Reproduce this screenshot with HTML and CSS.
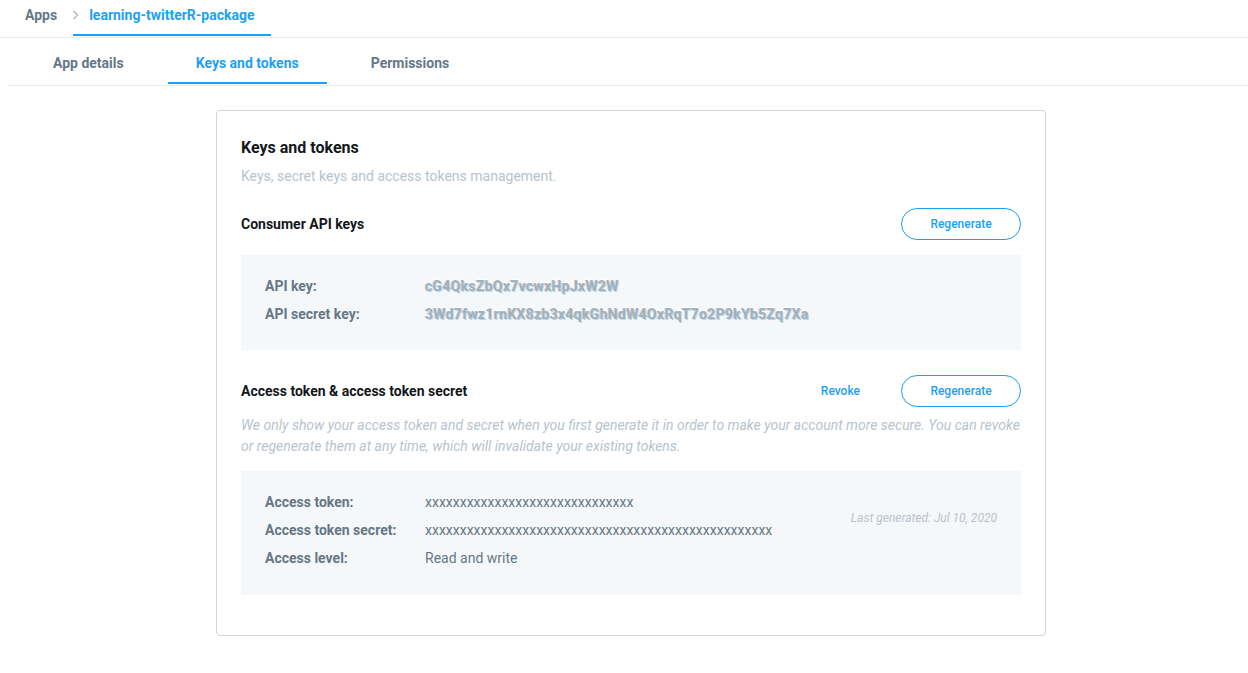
FILE: index.html
```html
<!DOCTYPE html>
<html>
<head>
<meta charset="utf-8">
<title>Keys and tokens</title>
<link rel="stylesheet" href="styles.css">
</head>
<body>
<header class="crumbs">
  <span class="crumb">Apps</span>
  <span class="chev"><svg width="7" height="10" viewBox="0 0 7 10"><path d="M1.5 1 L5.5 5 L1.5 9" fill="none" stroke="#aab8c2" stroke-width="1.3"/></svg></span>
  <span class="crumb crumb-active">learning-twitterR-package</span>
</header>
<nav class="tabs">
  <span class="tab">App details</span>
  <span class="tab tab-active">Keys and tokens</span>
  <span class="tab">Permissions</span>
</nav>
<main class="card">
  <h1 class="title">Keys and tokens</h1>
  <p class="subtitle">Keys, secret keys and access tokens management.</p>

  <div class="section-head first">
    <h2 class="section-title">Consumer API keys</h2>
    <div class="actions">
      <button class="btn">Regenerate</button>
    </div>
  </div>
  <div class="box box-keys">
    <div class="rows">
      <div class="row"><span class="label">API key:</span><span class="value blur">cG4QksZbQx7vcwxHpJxW2W</span></div>
      <div class="row"><span class="label">API secret key:</span><span class="value blur">3Wd7fwz1rnKX8zb3x4qkGhNdW4OxRqT7o2P9kYb5Zq7Xa</span></div>
    </div>
  </div>

  <div class="section-head">
    <h2 class="section-title">Access token &amp; access token secret</h2>
    <div class="actions">
      <button class="link">Revoke</button>
      <button class="btn">Regenerate</button>
    </div>
  </div>
  <p class="note">We only show your access token and secret when you first generate it in order to make your account more secure. You can revoke or regenerate them at any time, which will invalidate your existing tokens.</p>
  <div class="box box-tokens">
    <div class="rows">
      <div class="row"><span class="label">Access token:</span><span class="value">xxxxxxxxxxxxxxxxxxxxxxxxxxxxxx</span></div>
      <div class="row"><span class="label">Access token secret:</span><span class="value">xxxxxxxxxxxxxxxxxxxxxxxxxxxxxxxxxxxxxxxxxxxxxxxxxx</span></div>
      <div class="row"><span class="label">Access level:</span><span class="value">Read and write</span></div>
    </div>
    <span class="generated">Last generated: Jul 10, 2020</span>
  </div>
</main>
</body>
</html>
```

FILE: styles.css
```css
* { box-sizing: border-box; }
body {
  margin: 0;
  font-family: Roboto, "Liberation Sans", sans-serif;
  background: #fff;
  color: #14171a;
}
.crumbs {
  display: flex;
  align-items: flex-start;
  height: 38px;
  padding-left: 25px;
  border-bottom: 1px solid #e6ecf0;
}
.crumb {
  font-size: 14px;
  font-weight: 700;
  line-height: 30px;
  color: #657786;
}
.chev {
  display: flex;
  align-items: center;
  height: 30px;
  margin-left: 15px;
  width: 7px;
}
.crumb-active {
  margin-left: -6px;
  padding: 0 16px;
  height: 36px;
  color: #1da1f2;
  border-bottom: 2px solid #1da1f2;
}
.tabs {
  display: flex;
  gap: 16px;
  margin-left: 8px;
  padding-left: 17px;
  height: 48px;
  border-bottom: 1px solid #e6ecf0;
}
.tab {
  height: 46px;
  padding: 6px 28px 0;
  line-height: 38px;
  font-size: 14px;
  font-weight: 700;
  color: #657786;
}
.tab-active {
  color: #1da1f2;
  border-bottom: 2px solid #1da1f2;
}
.card {
  width: 830px;
  margin: 24px 0 0 216px;
  padding: 27px 24px 40px;
  border: 1px solid #ccd6dd;
  border-radius: 4px;
}
.title {
  margin: 0;
  font-size: 16px;
  line-height: 20px;
  font-weight: 700;
}
.subtitle {
  margin: 8px 0 0;
  font-size: 14px;
  line-height: 20px;
  color: #b8c3cc;
}
.section-head {
  display: flex;
  align-items: center;
  justify-content: space-between;
  height: 32px;
  margin-top: 25px;
}
.section-head.first { margin-top: 22px; }
.section-title {
  margin: 0;
  font-size: 14px;
  font-weight: 700;
  line-height: 20px;
}
.actions {
  display: flex;
  align-items: center;
  gap: 41px;
}
.btn {
  width: 120px;
  height: 32px;
  border: 1px solid #1da1f2;
  border-radius: 16px;
  background: #fff;
  color: #1da1f2;
  font-family: Roboto, "Liberation Sans", sans-serif;
  font-size: 12px;
  font-weight: 500;
  padding: 0;
}
.link {
  border: 0;
  background: none;
  padding: 0;
  color: #1da1f2;
  font-family: Roboto, "Liberation Sans", sans-serif;
  font-size: 12px;
  font-weight: 500;
}
.box {
  display: flex;
  justify-content: space-between;
  align-items: flex-start;
  background: #f5f8fa;
  padding: 17px 24px 22px;
}
.box-keys { margin-top: 15px; }
.box-tokens { margin-top: 14px; padding-bottom: 23px; }
.row {
  display: flex;
  height: 28px;
  line-height: 28px;
  font-size: 14px;
}
.label {
  width: 160px;
  font-weight: 700;
  color: #657786;
}
.value { color: #657786; }
.blur {
  white-space: nowrap;
  font-weight: 700;
  color: #a3afba;
  letter-spacing: 0.3px;
  text-shadow: 1px 1px rgba(29,161,242,0.35), -1px 0 rgba(230,160,110,0.4), 0 -1px rgba(255,255,255,0.9);
  filter: blur(0.7px);
}
.note {
  margin: 8px 0 0;
  font-size: 14px;
  line-height: 21px;
  font-style: italic;
  color: #b8c3cc;
}
.generated {
  margin-top: 22px;
  font-size: 12px;
  line-height: 16px;
  font-style: italic;
  color: #b8c3cc;
}
```
